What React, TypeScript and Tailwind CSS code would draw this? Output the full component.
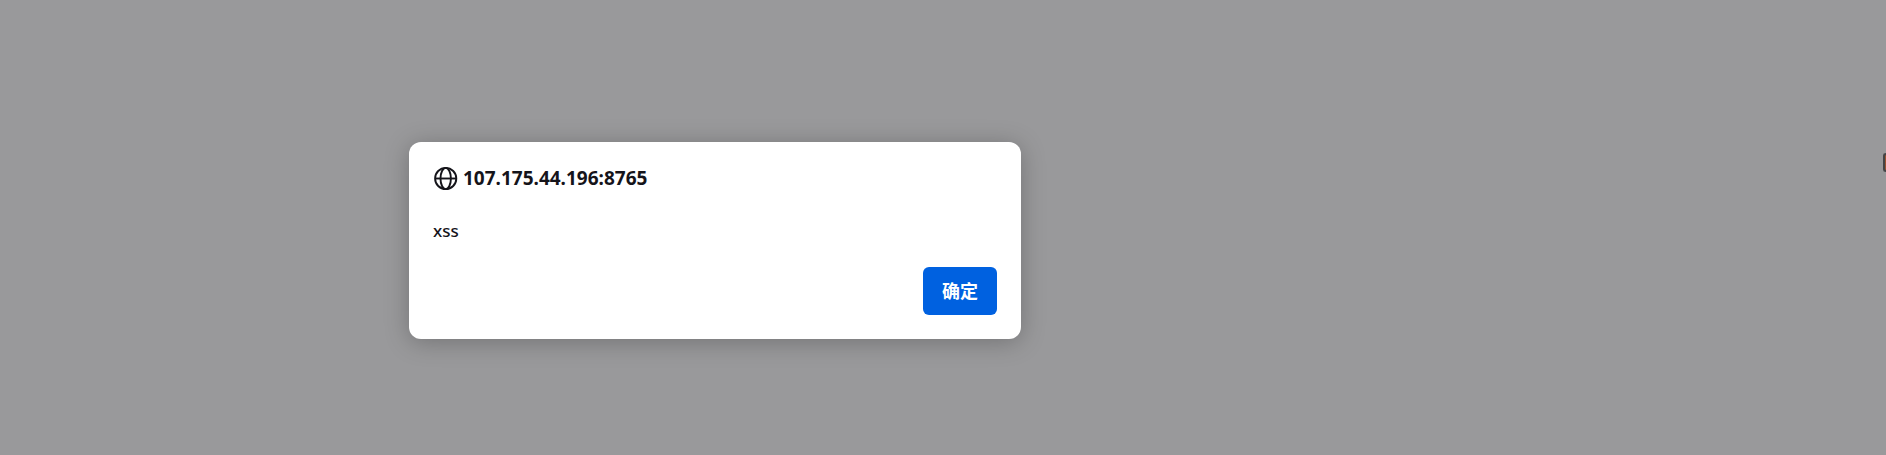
export default function App() {
  return (
    <main className="flex min-h-screen items-start overflow-hidden bg-[#99999b] pt-[142px] pl-[409px] font-['Noto_Sans','Noto_Sans_CJK_SC',sans-serif] text-[#15141a]">
      <section
        role="alertdialog"
        aria-labelledby="origin"
        aria-describedby="message"
        className="flex w-full max-w-[612px] flex-col rounded-xl bg-white p-6 shadow-[0_3px_24px_rgba(0,0,0,0.25)]"
      >
        <header className="flex items-center gap-[5px]">
          <svg viewBox="0 0 25 25" className="size-[25px]" fill="none" stroke="currentColor" strokeWidth="1.9" aria-hidden="true">
            <circle cx="12.7" cy="12.5" r="10.6" />
            <ellipse cx="12.7" cy="12.5" rx="5.2" ry="10.6" />
            <path d="M2 12.5h21.4" />
          </svg>
          <h1 id="origin" className="text-[19px] leading-[25px] font-bold">107.175.44.196:8765</h1>
        </header>
        <p id="message" className="mt-7 text-[17px] leading-6 font-medium">xss</p>
        <button type="button" className="mt-6 h-12 self-end rounded-md bg-[#0061e0] px-[19px] text-[18px] leading-6 font-bold text-white">
          确定
        </button>
      </section>
      <div className="absolute top-[153px] right-0 h-[19px] w-[3px] rounded-l-[3px] border-y-2 border-l-2 border-[#444446] bg-[#99512f]" />
    </main>
  );
}
